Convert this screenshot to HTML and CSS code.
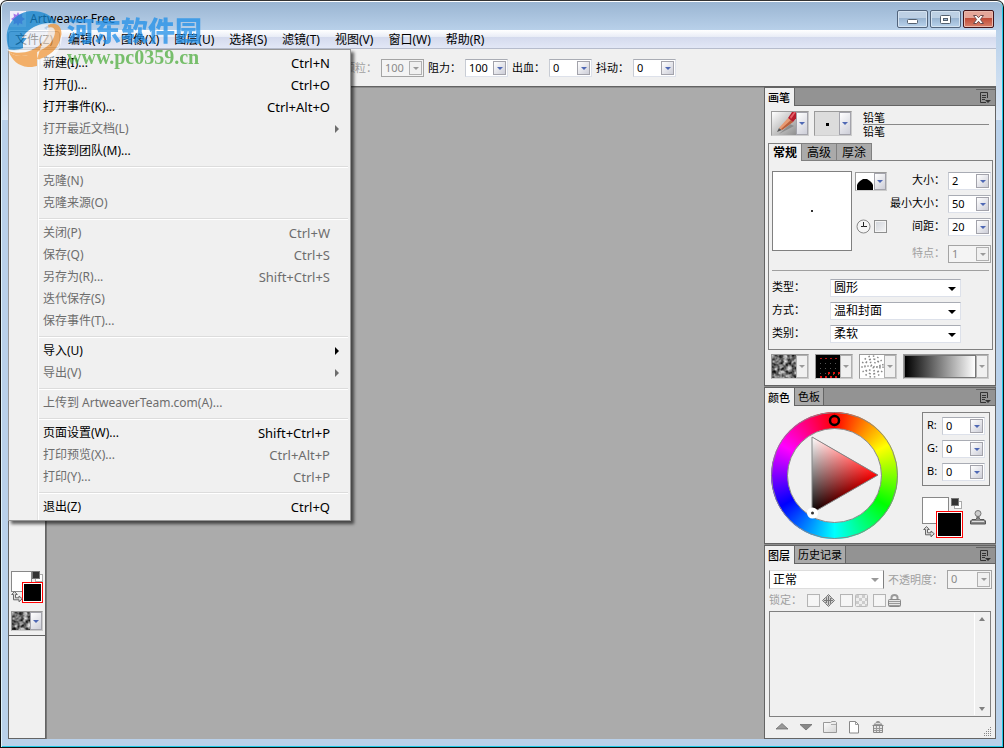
FILE: index.html
```html
<!DOCTYPE html>
<html lang="zh-CN">
<head>
<meta charset="utf-8">
<title>Artweaver Free</title>
<link rel="stylesheet" href="styles.css">
</head>
<body>
<svg class="defs" width="0" height="0" aria-hidden="true">
  <defs>
    <filter id="grain" x="0" y="0" width="100%" height="100%" color-interpolation-filters="sRGB">
      <feTurbulence type="fractalNoise" baseFrequency="0.25" numOctaves="3" seed="4"/>
      <feColorMatrix values="1.3 0 0 0 -0.2  1.3 0 0 0 -0.2  1.3 0 0 0 -0.2  0 0 0 0 1"/>
    </filter>
    <linearGradient id="paper" x1="0" y1="0" x2="1" y2="1"><stop offset="0" stop-color="#fff"/><stop offset="1" stop-color="#d4d4d4"/></linearGradient>
    <symbol id="i-menu" viewBox="0 0 11 12">
      <path d="M6 10.500H.5V.5h7V6" fill="none" stroke="#333"/><path d="M2 3.500h4M2 5.500h4M2 7.500h3" stroke="#333"/><path d="M5 8h6L8 11z" fill="#333"/>
    </symbol>
    <symbol id="i-default" viewBox="0 0 11 11">
      <rect x="3.500" y="3.500" width="7" height="7" fill="#fff" stroke="#aaa"/><rect x=".5" y=".5" width="7" height="7" fill="#333" stroke="#777"/>
    </symbol>
    <symbol id="i-swap" viewBox="0 0 12 12">
      <path d="M3.500 .5L.7 3.500h1.800v5.300h5.500v2L11.300 7.800 8 5v1.800H4.500V3.500h1.800z" fill="#ddd" stroke="#666" stroke-width="1"/>
    </symbol>
  </defs>
</svg>

<div class="window">
  <header class="titlebar">
    <svg class="app-icon" width="16" height="16" viewBox="0 0 16 16"><rect width="16" height="16" fill="#f3effa"/><path d="M8 1l1.500 3 3-1.500L12 6l3 2-3 2 .5 3.500-3-1.500L8 15l-1.500-3-3 1.500L4 10 1 8l3-2-.5-3.500 3 1.500z" fill="#a878e8"/></svg>
    <h1>Artweaver Free</h1>
    <div class="window-buttons">
      <button class="wb" aria-label="最小化"><svg width="13" height="13" viewBox="0 0 13 13"><rect x="1.500" y="6.500" width="10" height="4" rx="1" fill="#fff" stroke="#53606f"/></svg></button>
      <button class="wb" aria-label="最大化"><svg width="13" height="13" viewBox="0 0 13 13"><rect x="1.500" y="2.500" width="10" height="8" rx="1" fill="#fff" stroke="#53606f"/><rect x="4.500" y="5.500" width="4" height="2" fill="#9db7d2" stroke="#53606f"/></svg></button>
      <button class="wb wb-close" aria-label="关闭"><svg width="13" height="13" viewBox="0 0 13 13"><path d="M1.500 2.500h3l2 2.200 2-2.200h3L8.400 6.500l3.100 4h-3l-2-2.200-2 2.200h-3l3.100-4z" fill="#fff" stroke="#6b4a4c"/></svg></button>
    </div>
  </header>

  <nav class="menubar">
    <button class="active">文件(Z)</button><button>编辑(Y)</button><button>图像(X)</button><button>图层(U)</button><button>选择(S)</button><button>滤镜(T)</button><button>视图(V)</button><button>窗口(W)</button><button>帮助(R)</button>
    <div class="menu" role="menu">
      <button role="menuitem">新建(I)...<kbd>Ctrl+N</kbd></button>
      <button role="menuitem">打开(J)...<kbd>Ctrl+O</kbd></button>
      <button role="menuitem">打开事件(K)...<kbd>Ctrl+Alt+O</kbd></button>
      <button role="menuitem" class="sub" disabled>打开最近文档(L)</button>
      <button role="menuitem">连接到团队(M)...</button>
      <hr>
      <button role="menuitem" disabled>克隆(N)</button>
      <button role="menuitem" disabled>克隆来源(O)</button>
      <hr>
      <button role="menuitem" disabled>关闭(P)<kbd>Ctrl+W</kbd></button>
      <button role="menuitem" disabled>保存(Q)<kbd>Ctrl+S</kbd></button>
      <button role="menuitem" disabled>另存为(R)...<kbd>Shift+Ctrl+S</kbd></button>
      <button role="menuitem" disabled>迭代保存(S)</button>
      <button role="menuitem" disabled>保存事件(T)...</button>
      <hr>
      <button role="menuitem" class="sub">导入(U)</button>
      <button role="menuitem" class="sub" disabled>导出(V)</button>
      <hr>
      <button role="menuitem" disabled>上传到 ArtweaverTeam.com(A)...</button>
      <hr>
      <button role="menuitem">页面设置(W)...<kbd>Shift+Ctrl+P</kbd></button>
      <button role="menuitem" disabled>打印预览(X)...<kbd>Ctrl+Alt+P</kbd></button>
      <button role="menuitem" disabled>打印(Y)...<kbd>Ctrl+P</kbd></button>
      <hr>
      <button role="menuitem">退出(Z)<kbd>Ctrl+Q</kbd></button>
    </div>
  </nav>

  <div class="toolbar">
    <label class="off" for="t1">颗粒：</label><span class="spin off"><input id="t1" value="100" disabled><button disabled aria-label="展开"></button></span>
    <label for="t2">阻力：</label><span class="spin"><input id="t2" value="100"><button aria-label="展开"></button></span>
    <label for="t3">出血：</label><span class="spin"><input id="t3" value="0"><button aria-label="展开"></button></span>
    <label for="t4">抖动：</label><span class="spin"><input id="t4" value="0"><button aria-label="展开"></button></span>
  </div>

  <main class="workspace">
    <aside class="toolbox">
      <div class="toolbox-main">
        <div class="swatches small">
          <button class="sw-back" aria-label="背景色"></button>
          <button class="sw-front" aria-label="前景色"></button>
          <svg class="sw-default" width="11" height="11"><use href="#i-default"/></svg>
          <svg class="sw-swap" width="12" height="12"><use href="#i-swap"/></svg>
        </div>
        <div class="picker short">
          <button aria-label="纹理"><svg width="20" height="18"><rect width="20" height="18" filter="url(#grain)"/></svg></button><button class="drop" aria-label="选择纹理"></button>
        </div>
      </div>
    </aside>
    <section class="canvas"></section>

    <aside class="panels">
      <section class="panel">
        <div class="tabs"><button class="on">画笔</button><button class="panel-menu" aria-label="面板菜单"><svg width="11" height="12"><use href="#i-menu"/></svg></button></div>
        <div class="brush">
          <div class="brush-head">
            <div class="picker">
              <button aria-label="画笔类别"><svg width="26" height="24" viewBox="0 0 26 24"><defs><linearGradient id="pb" x1="0" y1="0" x2="1" y2="1"><stop offset="0" stop-color="#fff"/><stop offset="1" stop-color="#888"/></linearGradient></defs><rect width="26" height="24" fill="url(#pb)"/><path d="M7 22L18 12l4 2z" fill="#555" opacity=".4"/><path d="M5 20l2-4 3 2z" fill="#555"/><path d="M7 16L16 6l5 4-11 8z" fill="#e89a72"/><path d="M10 18l11-8-2-2-10 9z" fill="#b9603c"/><path d="M16 6l4-6h5v5l-4 5z" fill="#b71c2c"/><path d="M18 5l4-5h2l-5 7z" fill="#e5606a"/></svg></button><button class="drop" aria-label="展开"></button>
            </div>
            <div class="picker">
              <button aria-label="画笔变体"><svg width="26" height="24"><rect width="26" height="24" fill="#dcdcdc"/><rect x="11" y="11" width="3" height="3"/></svg></button><button class="drop" aria-label="展开"></button>
            </div>
            <div class="brush-name"><span>铅笔</span><span>铅笔</span></div>
          </div>
          <div class="subtabs"><button class="on">常规</button><button>高级</button><button>厚涂</button></div>
          <div class="settings">
            <div class="settings-top">
              <div class="preview"></div>
              <div class="shape-col">
                <div class="picker tiny"><button aria-label="笔尖形状"><svg width="18" height="17"><rect width="18" height="17" fill="#fff"/><path d="M1 17v-5l1-2 2-2 3-2h4l3 2 2 2 1 2v5z"/></svg></button><button class="drop" aria-label="展开"></button></div>
                <div class="clock-row">
                  <svg width="15" height="15" viewBox="0 0 15 15"><circle cx="7.500" cy="7.500" r="6.500" fill="#f4f4f4" stroke="#888"/><path d="M7.500 3v4.500H11M7.500 7.500H5" fill="none" stroke="#222"/></svg>
                  <input class="box" type="checkbox" aria-label="间距随时间">
                </div>
              </div>
              <div class="fields">
                <label for="b1">大小：</label><span class="spin"><input id="b1" value="2"><button aria-label="展开"></button></span>
                <label for="b2">最小大小：</label><span class="spin"><input id="b2" value="50"><button aria-label="展开"></button></span>
                <label for="b3">间距：</label><span class="spin"><input id="b3" value="20"><button aria-label="展开"></button></span>
                <label class="off last" for="b4">特点：</label><span class="spin off last"><input id="b4" value="1" disabled><button disabled aria-label="展开"></button></span>
              </div>
            </div>
            <div class="combos">
              <label for="c1">类型：</label><span class="combo"><select id="c1"><option>圆形</option></select></span>
              <label for="c2">方式：</label><span class="combo"><select id="c2"><option>温和封面</option></select></span>
              <label for="c3">类别：</label><span class="combo"><select id="c3"><option>柔软</option></select></span>
            </div>
          </div>
          <div class="textures">
            <div class="picker off"><button aria-label="纸张纹理"><svg width="26" height="25"><rect width="26" height="25" filter="url(#grain)"/></svg></button><button class="drop" aria-label="展开"></button></div>
            <div class="picker off"><button aria-label="图案"><svg width="26" height="25" viewBox="0 0 26 25"><rect width="26" height="25"/><path d="M4 3.500h18" stroke="#b11" stroke-dasharray="2 3"/><path d="M12 18h12M4 22h20" stroke="#d11" stroke-width="2" stroke-dasharray="2 3"/><path d="M4 8.500h20M4 13.500h20M4 18.500h6" stroke="#555" stroke-dasharray="1 4"/><path d="M12 19.500h12M4 23.500h20" stroke="#6a6a20" stroke-dasharray="1 4"/></svg></button><button class="drop" aria-label="展开"></button></div>
            <div class="picker off"><button aria-label="喷嘴"><svg width="26" height="25" viewBox="0 0 26 25"><rect width="26" height="25" fill="#fff"/><g fill="none" stroke="#888" stroke-width="1.500"><circle cx="12.500" cy="11.500" r="10.500" stroke-dasharray="1.500 3"/><circle cx="12.500" cy="11.500" r="7.500" stroke-dasharray="2 2.500"/><circle cx="12.500" cy="11.500" r="4.500" stroke-dasharray="1.500 3"/><circle cx="12.500" cy="11.500" r="1.500" stroke-dasharray="2 2"/></g></svg></button><button class="drop" aria-label="展开"></button></div>
            <div class="picker wide off"><button class="ramp" aria-label="渐变"></button><button class="drop" aria-label="展开"></button></div>
          </div>
        </div>
      </section>

      <section class="panel">
        <div class="tabs"><button class="on">颜色</button><button>色板</button><button class="panel-menu" aria-label="面板菜单"><svg width="11" height="12"><use href="#i-menu"/></svg></button></div>
        <div class="color">
          <div class="wheel">
            <svg viewBox="0 0 127 127">
              <defs>
                <linearGradient id="gr" gradientUnits="userSpaceOnUse" x1="41" y1="101" x2="74" y2="44"><stop offset="0" stop-color="#000"/><stop offset="1" stop-color="#f00"/></linearGradient>
                <linearGradient id="gc" gradientUnits="userSpaceOnUse" x1="41" y1="25" x2="74" y2="82"><stop offset="0" stop-color="#0ff"/><stop offset="1" stop-color="#000"/></linearGradient>
              </defs>
              <circle cx="63.500" cy="63.500" r="63" fill="none" stroke="#888"/>
              <circle cx="63.500" cy="63.500" r="47" fill="#f0f0f0" stroke="#888"/>
              <g class="mix"><path d="M41 25L107 63 41 101z" fill="url(#gr)"/><path class="add" d="M41 25L107 63 41 101z" fill="url(#gc)"/></g>
              <path d="M41 25L107 63 41 101z" fill="none" stroke="#888"/>
              <circle cx="63.500" cy="8.500" r="4.500" fill="none" stroke="#000" stroke-width="2.500"/>
              <circle cx="41.500" cy="101" r="3.500" fill="#333" stroke="#fff" stroke-width="4"/>
            </svg>
          </div>
          <div class="color-side">
            <div class="rgb">
              <label for="r">R:</label><span class="spin"><input id="r" value="0"><button aria-label="展开"></button></span>
              <label for="g">G:</label><span class="spin"><input id="g" value="0"><button aria-label="展开"></button></span>
              <label for="b">B:</label><span class="spin"><input id="b" value="0"><button aria-label="展开"></button></span>
            </div>
            <div class="color-tools">
              <div class="swatches">
                <button class="sw-back" aria-label="背景色"></button>
                <button class="sw-front" aria-label="前景色"></button>
                <svg class="sw-default" width="11" height="11"><use href="#i-default"/></svg>
                <svg class="sw-swap" width="12" height="12"><use href="#i-swap"/></svg>
              </div>
              <button class="bare" aria-label="克隆颜色"><svg width="16" height="15" viewBox="0 0 16 15"><path d="M7 5h2v3l1 1.500h4l1.500 1.500v3H.5v-3L2 9.500h4L7 8z" fill="#888" stroke="#555"/><circle cx="8" cy="3.500" r="3" fill="#ccc" stroke="#777"/><path d="M2 11.500h12" stroke="#ddd"/></svg></button>
            </div>
          </div>
        </div>
      </section>

      <section class="panel layers">
        <div class="tabs"><button class="on">图层</button><button>历史记录</button><button class="panel-menu" aria-label="面板菜单"><svg width="11" height="12"><use href="#i-menu"/></svg></button></div>
        <div class="layer-body">
          <div class="blend">
            <span class="combo framed"><select aria-label="混合模式"><option>正常</option></select></span>
            <label class="off" for="op">不透明度：</label><span class="spin off"><input id="op" value="0" disabled><button disabled aria-label="展开"></button></span>
          </div>
          <div class="locks">
            <span class="off">锁定：</span>
            <label><input class="box" type="checkbox" disabled aria-label="锁定位置"><svg width="13" height="13" viewBox="0 0 13 13"><path d="M6.500 .5l3 3v1h1l2 2-3 3h-1v1l-2 2-3-3v-1h-1l-2-2 3-3h1v-1z" fill="#ccc" stroke="#777"/><path d="M6.500 2v9M2 6.500h9M4.500 4v5M8.500 4v5" stroke="#777"/></svg></label>
            <label><input class="box" type="checkbox" disabled aria-label="锁定透明"><svg width="13" height="13" viewBox="0 0 13 13"><rect x=".5" y=".5" width="12" height="12" rx="1" fill="#eee" stroke="#bbb"/><path d="M1 1h3v3H1zM7 1h3v3H7zM4 4h3v3H4zM10 4h2v3h-2zM1 7h3v3H1zM7 7h3v3H7zM4 10h3v2H4zM10 10h2v2h-2z" fill="#ccc"/></svg></label>
            <label><input class="box" type="checkbox" disabled aria-label="全部锁定"><svg width="13" height="13" viewBox="0 0 13 13"><path d="M3.500 6V3.500q0-2.500 3-2.500t3 2.500V6" fill="none" stroke="#999" stroke-width="2"/><rect x=".5" y="5.500" width="12" height="7" rx="1" fill="#e4e4e4" stroke="#888"/><path d="M1 7.500h11M1 9.500h11M1 11.500h11" stroke="#999"/></svg></label>
          </div>
          <div class="list"><div class="scroll"><button class="up" aria-label="向上滚动"></button><button class="down" aria-label="向下滚动"></button></div></div>
          <div class="layer-tools">
            <button class="bare" aria-label="上移"><svg width="14" height="14" viewBox="0 0 14 14"><path d="M7 3.500l6 5.500H1z" fill="#999" stroke="#666" stroke-width=".7"/></svg></button>
            <button class="bare" aria-label="下移"><svg width="14" height="14" viewBox="0 0 14 14"><path d="M7 10L1 4.500h12z" fill="#888" stroke="#666" stroke-width=".7"/></svg></button>
            <button class="bare" aria-label="新建组"><svg width="14" height="14" viewBox="0 0 14 14"><path d="M.5 12.500v-10h7l1.500-1h3.500l1 1v10z" fill="url(#paper)" stroke="#999"/><path d="M8 4.500h5" stroke="#aaa"/></svg></button>
            <button class="bare" aria-label="新建图层"><svg width="14" height="14" viewBox="0 0 14 14"><path d="M2.500 1.500h6l3 3v8.500h-9z" fill="#fff" stroke="#888"/><path d="M8.500 1.500v3h3" fill="none" stroke="#999"/></svg></button>
            <button class="bare" aria-label="删除图层"><svg width="14" height="14" viewBox="0 0 14 14"><path d="M2.500 6v6.500h9V6" fill="#e4e4e4" stroke="#888"/><path d="M1.500 5.500h11" stroke="#888"/><path d="M3 4.500l2-2h4l2 2z" fill="#ddd" stroke="#999"/><path d="M5.500 1.500h3M3 8.500h8M3 10.500h8M5.500 6v6M8.500 6v6" stroke="#999"/></svg></button>
            <svg class="grip" width="9" height="9" viewBox="0 0 9 9"><path d="M7.500 0v9M5.500 2v7M3.500 4v5M1.500 6v3" stroke="#888" stroke-dasharray="1 1"/></svg>
          </div>
        </div>
      </section>
    </aside>
  </main>

  <div class="watermark" aria-hidden="true">
    <svg width="56" height="58" viewBox="0 0 56 58">
      <path d="M3 40C-4 20 6 2 26 1c11 0 20 4 24 12l-5 2c-9-2-18 1-25 8l-4 5h5l-4 5v6c-5 2-10 2-14 1z" fill="#1486cf"/>
      <path d="M20 23c8-8 20-12 30-9-6 0-9 2-12 4 6 2 2 12-6 18-8 6-20 9-30 5l-1-2c6 1 11 1 16-1v-5l4-5h-5z" fill="#fff" opacity=".8"/>
      <path d="M42 15c10-4 15 3 13 12-2 12-12 20-24 23v6c-4 1-6 1-9 1V45C15 47 7 46 2 41c12 4 25 1 33-7 6-6 9-13 7-19z" fill="#f39a3c"/>
      <path d="M3 42c3 8 9 14 19 15V45c-7 2-14 1-19-3z" fill="#f39a3c"/>
      <path d="M41 18c8-3 10 3 6 11-3 6-9 10-16 13v8c14-4 22-12 24-24l1-1c0 16-10 25-21 30v-6h-4z" fill="#fff" opacity=".8"/>
    </svg>
    <div class="wm-text"><b>河东软件园</b><span>www.pc0359.cn</span></div>
  </div>
</div>
</body>
</html>
```
FILE: styles.css
```css
* { box-sizing: border-box; }
body {
  margin: 0;
  background: #fff;
  color: #000;
  font: 11px/16px "Noto Sans", "Noto Sans CJK SC", sans-serif;
}
button, input, select { font: inherit; color: inherit; margin: 0; padding: 0; border: 0; border-radius: 0; background: none; }
svg { display: block; flex: none; }
.defs { position: absolute; }
.off { color: #a0a0a0; }

.window {
  position: relative;
  display: flex;
  flex-direction: column;
  min-height: 100vh;
  padding: 0 6px 8px;
  border: 1px solid #111;
  border-top-color: #333;
  border-radius: 7px 7px 0 0;
  background: linear-gradient(#99b4d1, #b9d1ea 30px, #dce8f6 119px, #b9d1ea 119px);
  box-shadow: inset 0 1px #fff, inset 1px 0 #dff3fb, inset -1px 0 #1fc8e6, inset 0 -1px #1fc8e6;
}
.titlebar { display: flex; align-items: center; height: 29px; padding: 0 3px; }
.titlebar h1 { flex: 1; margin: 0; padding: 7px 0 0 4px; font-size: 12px; font-weight: 400; }
.app-icon { margin-top: 6px; }
.window-buttons { display: flex; gap: 2px; margin-top: 7px; }
.wb {
  display: flex; align-items: center; justify-content: center;
  width: 31px; height: 18px;
  border: 1px solid #52647c; border-radius: 2px;
  background: linear-gradient(#bdd0e4 45%, #98b3d0 45%, #b9d3ec);
  box-shadow: inset 0 0 0 1px #d5e3f1;
}
.wb-close { border-color: #431419; background: linear-gradient(#e5a699 45%, #c04a36 45%, #d7806a); box-shadow: inset 0 0 0 1px #eab9ad; }

.menubar {
  position: relative; z-index: 3;
  display: flex; gap: 1px;
  margin: 0 1px; padding-top: 1px;
  height: 19px;
  background: linear-gradient(#fff, #e8ecf6 7px, #d4daed 7px, #e2e7f6);
  border-bottom: 1px solid #b6bccc;
  font-size: 12px;
}
.menubar > button { padding: 0 6px; border: 1px solid transparent; line-height: 15px; white-space: nowrap; }
.menubar > .active { border-color: #8a95a8; border-radius: 3px; background: #d5dcec; }
.menu {
  position: absolute; left: 0; top: 19px;
  width: 343px; padding: 2px;
  display: flex; flex-direction: column;
  border: 1px solid #979797;
  background: linear-gradient(90deg, transparent 28px, #e2e2e2 28px, #e2e2e2 29px, #fff 29px, #fff 30px, transparent 30px), #f0f0f0;
  box-shadow: 3px 3px 3px rgba(0, 0, 0, .6);
}
.menu button { position: relative; display: flex; justify-content: space-between; padding: 0 18px 0 32px; line-height: 22px; text-align: left; }
.menu button:disabled { color: #6d6d6d; }
.menu kbd { font: inherit; font-size: 13px; }
.menu hr { width: calc(100% - 28px); height: 2px; margin: 4px 0 2px 28px; border: 0; border-top: 1px solid #dcdcdc; background: #fff; }
.menu .sub::after { content: ""; position: absolute; right: 9px; top: 7px; border: 4px solid transparent; border-left-color: currentColor; border-right: 0; }

.toolbar {
  display: flex; align-items: center; justify-content: flex-start; gap: 4px;
  height: 38px; margin: 0 1px; padding: 1px 0 0 336px;
  background: #f0f0f0;
  border-bottom: 1px solid #636363;
}
label, .locks span { white-space: nowrap; font-family: "Noto Sans", "Noto Sans CJK TC", sans-serif; }
.spin {
  display: flex; flex: none; width: 43px; height: 18px; padding: 1px;
  border: 1px solid #dde1ea; border-top-color: #a9acb4; border-left-color: #c8ccd4;
  background: #fff;
}
.spin.off { border: 1px solid #a4a4a4; background: #f4f4f4; color: #8a8a8a; }
.spin input { flex: 1; min-width: 0; padding-left: 2px; line-height: 14px; height: 14px; }
.spin button, .drop {
  flex: none; width: 13px;
  border: 1px solid #a3a3ab;
  background: linear-gradient(135deg, #fff, #cdced8);
  display: flex; align-items: center; justify-content: center;
  color: #4f68b4;
}
.spin.off button, .off .drop { background: #f0f0f0; color: #9a9a9a; border-color: #b0b0b0; }
.spin button::before, .drop::before { content: ""; border: 3px solid transparent; border-top-color: currentColor; border-bottom: 0; }

.workspace { display: grid; grid-template-columns: 38px 1fr 232px; flex: 1; margin: 0 1px; }
.canvas { background: #ababab; border-top: 1px solid #8c8c8c; border-left: 1px solid #777; }
.toolbox { border: 1px solid #646464; background: #f0f0f0; }
.toolbox-main { display: flex; flex-direction: column; gap: 8px; padding: 483px 2px 4px; border-bottom: 1px solid #646464; }

.picker { display: flex; flex: none; width: 38px; height: 25px; border: 1px solid #9a9a9a; border-right-color: #ccc; border-bottom-color: #ccc; }
.picker > button:first-child { flex: 1; overflow: hidden; min-width: 0; }
.picker .drop { width: 12px; }
.picker.short { width: 32px; height: 20px; }
.picker.tiny { width: 32px; height: 19px; }
.picker.wide { flex: 1; }
.picker .ramp { background: linear-gradient(90deg, #000, #fff); border: 1px solid #777; }

.swatches { position: relative; flex: none; width: 41px; height: 41px; }
.swatches > * { position: absolute; }
.sw-back { left: 0; top: 0; width: 27px; height: 27px; border: 1px solid #888; background: #fff; }
.sw-front { right: 0; bottom: 0; width: 27px; height: 27px; border: 1px solid #f00; background: #000; box-shadow: inset 0 0 0 1px #fff; }
.sw-default { right: 1px; top: 1px; }
.sw-swap { left: 1px; bottom: 0; }
.small { width: 32px; height: 32px; }
.small .sw-back, .small .sw-front { width: 21px; height: 21px; }
.small .sw-default { right: 0; top: 0; }
.small .sw-swap { left: 0; }

.panels { display: flex; flex-direction: column; gap: 1px; background: #8c8c8c; }
.panel { border: 1px solid #646464; background: #f0f0f0; }
.tabs { display: flex; height: 18px; background: #939393; border-bottom: 1px solid #646464; }
.tabs button { padding: 0 3px; border-right: 1px solid #646464; background: #aaa; line-height: 17px; }
.tabs .on { height: 18px; padding-right: 4px; background: #f0f0f0; font-weight: 500; }
.tabs .panel-menu { margin: 1px 0 0 auto; padding: 1px 4px 0; border: 0; border-top: 1px solid #646464; background: none; }

.brush { padding: 5px 2px 6px 3px; }
.brush-head { display: flex; gap: 5px; padding: 0 4px 5px 3px; }
.brush-name { flex: 1; display: flex; flex-direction: column; margin-left: 6px; }
.brush-name span { line-height: 13px; height: 13px; }
.brush-name span:first-child { height: 14px; border-bottom: 1px solid #888; }
.subtabs { display: flex; }
.subtabs button { height: 17px; padding: 0 5px; border: 1px solid #808080; border-left: 0; border-bottom: 0; background: #aaa; font-size: 12px; line-height: 15px; }
.subtabs .on { position: relative; height: 18px; margin-bottom: -1px; padding: 0 4px; border-left: 1px solid #808080; background: #f0f0f0; font-weight: 700; }
.settings { padding: 10px 3px 6px; border: 1px solid #808080; }
.settings-top { display: flex; gap: 3px; padding-bottom: 7px; border-bottom: 1px solid #a0a0a0; }
.preview { flex: none; width: 80px; height: 80px; border: 1px solid #808080; background: radial-gradient(circle at center, #333 1px, #fff 1px); }
.shape-col { display: flex; flex-direction: column; gap: 28px; padding-top: 1px; }
.clock-row { display: flex; align-items: center; gap: 3px; padding-left: 1px; }
.box { appearance: none; width: 13px; height: 13px; border: 1px solid #8e8f8f; background: linear-gradient(135deg, #cfd3da, #f6f6f6); box-shadow: inset 0 0 0 1px #f4f4f4; }
.box:disabled { border-color: #b4b4b4; background: #f6f6f6; }
.fields { flex: 1; display: grid; grid-template-columns: 1fr auto; gap: 5px 3px; padding-top: 1px; text-align: right; }
.fields .last { margin-top: 4px; }
.combos { display: grid; grid-template-columns: 53px 131px; gap: 5px; padding-top: 8px; }
.combo { position: relative; display: flex; height: 18px; border: 1px solid #dde1ea; border-top-color: #a9acb4; background: #fff; }
.combo select { appearance: none; width: 100%; padding: 0 3px; font-size: 12px; line-height: 16px; }
.combo::after { content: ""; position: absolute; right: 4px; top: 7px; border: 4px solid transparent; border-top-color: #000; border-bottom: 0; pointer-events: none; }
.textures { display: flex; gap: 6px; padding: 4px 4px 0 3px; }

.color { display: flex; justify-content: space-between; padding: 6px 5px 4px 6px; }
.wheel { position: relative; width: 127px; height: 127px; border-radius: 50%; background: conic-gradient(#f00, #ff0, #0f0, #0ff, #00f, #f0f, #f00); }
.mix { isolation: isolate; }
.add { mix-blend-mode: screen; }
.color-side { display: flex; flex-direction: column; gap: 11px; }
.rgb { display: grid; grid-template-columns: auto 43px; gap: 5px 3px; padding: 4px; border: 1px solid #808080; }
.rgb label { min-width: 12px; }
.color-tools { display: flex; align-items: center; justify-content: space-between; padding-right: 4px; }

.layers { flex: 1; display: flex; flex-direction: column; }
.layer-body { flex: 1; display: flex; flex-direction: column; padding: 6px 3px 1px 4px; }
.blend { display: flex; gap: 4px; }
.blend .combo { flex: 1; height: 19px; border: 1px solid #808080; border-top-color: #ddd; border-bottom-color: #ddd; }
.blend .combo::after { border-top-color: #999; }
.blend .spin { width: 45px; height: 19px; }
.blend label { line-height: 19px; }
.locks { display: flex; gap: 5px; padding: 3px 0; }
.locks label { display: flex; align-items: center; gap: 2px; }
.list { flex: 1; display: flex; justify-content: flex-end; margin-right: 1px; padding: 1px; border: 1px solid #808080; }
.scroll { display: flex; flex-direction: column; justify-content: space-between; width: 15px; padding: 4px; border-left: 1px solid #fff; background: #f0f0f0; }
.scroll button { width: 0; border: 3px solid transparent; border-top: 0; border-bottom: 4px solid #808080; }
.scroll .down { border-bottom: 0; border-top: 4px solid #808080; }
.bare { display: block; }
.layer-tools { position: relative; display: flex; gap: 10px; padding: 3px 6px; }
.grip { position: absolute; right: 0; bottom: 1px; }

.watermark { position: absolute; z-index: 4; left: 5px; top: 9px; display: flex; gap: 5px; opacity: .75; pointer-events: none; }
.wm-text { display: flex; flex-direction: column; }
.wm-text b { padding-top: 3px; font: 900 27px/33px "Noto Sans CJK SC", sans-serif; color: #1f8fe8; }
.wm-text span { font: 700 20px/22px "Liberation Serif", serif; color: #4fae3f; }
```
